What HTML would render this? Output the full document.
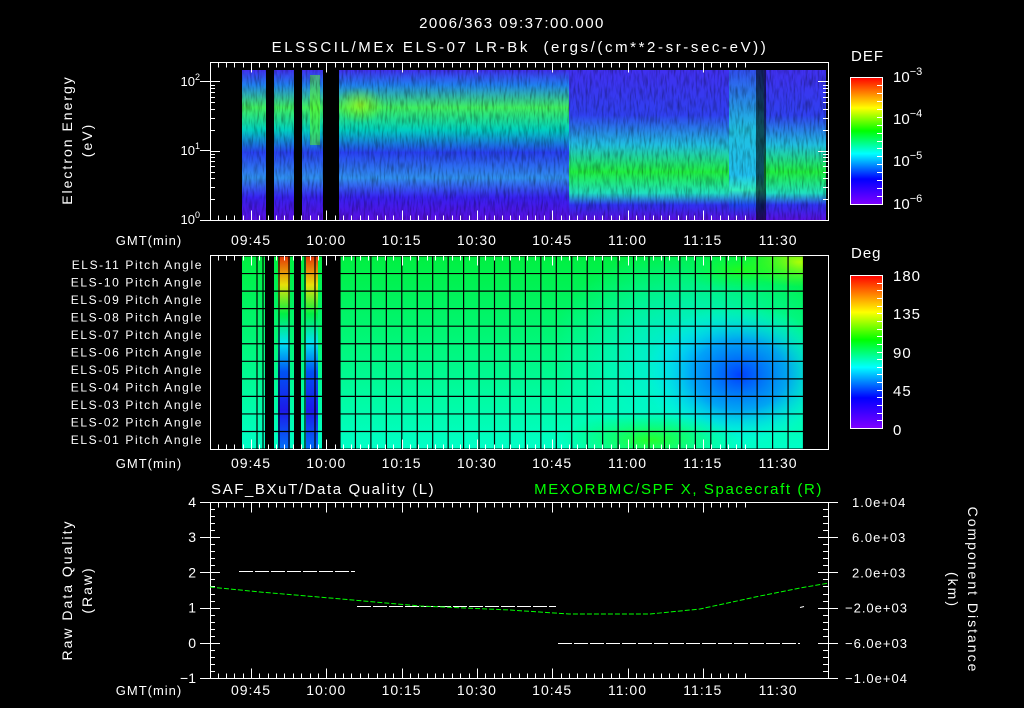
<!DOCTYPE html>
<html><head><meta charset="utf-8"><style>
html,body{margin:0;padding:0;background:#000;width:1024px;height:708px;overflow:hidden}
svg{display:block}
text{font-family:"Liberation Sans",sans-serif;fill:#fff}
</style></head><body>
<svg id="s" width="1024" height="708" xmlns="http://www.w3.org/2000/svg">
<defs>
<clipPath id="c1"><rect x="211" y="63" width="617" height="157"/></clipPath>
<clipPath id="c2"><rect x="340" y="256" width="464" height="193"/></clipPath>
<linearGradient id="cb" x1="0" y1="0" x2="0" y2="1">
<stop offset="0" stop-color="#ff0000"/><stop offset="0.12" stop-color="#ff8000"/><stop offset="0.24" stop-color="#ffff00"/><stop offset="0.42" stop-color="#00ff00"/><stop offset="0.6" stop-color="#00ffff"/><stop offset="0.8" stop-color="#0000ff"/><stop offset="1" stop-color="#8000ff"/>
</linearGradient>
<linearGradient id="sp" x1="0" y1="0" x2="0" y2="1">
<stop offset="0" stop-color="#4030f0"/><stop offset="0.1" stop-color="#2080f0"/><stop offset="0.25" stop-color="#40f060"/><stop offset="0.4" stop-color="#00d0c0"/><stop offset="0.55" stop-color="#2840f0"/><stop offset="0.72" stop-color="#3090f0"/><stop offset="0.85" stop-color="#3820f0"/><stop offset="1" stop-color="#5810e0"/>
</linearGradient>
<linearGradient id="sp2" x1="0" y1="0" x2="0" y2="1">
<stop offset="0" stop-color="#4030f0"/><stop offset="0.3" stop-color="#3040f0"/><stop offset="0.5" stop-color="#20c0e0"/><stop offset="0.68" stop-color="#20f040"/><stop offset="0.82" stop-color="#20e0c0"/><stop offset="0.9" stop-color="#3030f0"/><stop offset="1" stop-color="#5810e0"/>
</linearGradient>
<linearGradient id="sp3" x1="0" y1="0" x2="0" y2="1">
<stop offset="0" stop-color="#3050f0"/><stop offset="0.4" stop-color="#20c0e0"/><stop offset="0.7" stop-color="#20c0f0"/><stop offset="0.8" stop-color="#30f0c0"/><stop offset="0.9" stop-color="#2040f0"/><stop offset="1" stop-color="#5810e0"/>
</linearGradient>
<linearGradient id="pa" x1="0" y1="0" x2="0" y2="1">
<stop offset="0" stop-color="#00f040"/><stop offset="0.5" stop-color="#00f880"/><stop offset="1" stop-color="#00ffc8"/>
</linearGradient>
<linearGradient id="pc" x1="0" y1="0" x2="0" y2="1">
<stop offset="0" stop-color="#ff2000"/><stop offset="0.15" stop-color="#ffe000"/><stop offset="0.3" stop-color="#00f040"/><stop offset="0.45" stop-color="#00e0ff"/><stop offset="0.6" stop-color="#0040ff"/><stop offset="0.8" stop-color="#2000f0"/><stop offset="1" stop-color="#0060ff"/>
</linearGradient>
<radialGradient id="bl"><stop offset="0" stop-color="#0040ff"/><stop offset="0.5" stop-color="#0090ff" stop-opacity="0.8"/><stop offset="1" stop-color="#00ffff" stop-opacity="0"/></radialGradient>
<radialGradient id="cy"><stop offset="0" stop-color="#00e0ff"/><stop offset="1" stop-color="#00ffff" stop-opacity="0"/></radialGradient>
<radialGradient id="gr"><stop offset="0" stop-color="#30ff00"/><stop offset="1" stop-color="#00ff40" stop-opacity="0"/></radialGradient>
<radialGradient id="ye"><stop offset="0" stop-color="#c0ff00"/><stop offset="1" stop-color="#80ff00" stop-opacity="0"/></radialGradient>
<filter id="nz"><feTurbulence type="fractalNoise" baseFrequency="0.5 0.08" numOctaves="2" seed="3"/><feColorMatrix type="matrix" values="0 0 0 0 0  0 0 0 0 0  0 0 0 0 0  0 0 0 -2.2 1.25"/></filter>
</defs>

<text x="512" y="28" font-size="15" text-anchor="middle" letter-spacing="1.5">2006/363 09:37:00.000</text>
<text x="520" y="52" font-size="15" text-anchor="middle" letter-spacing="2.6" xml:space="preserve">ELSSCIL/MEx ELS-07 LR-Bk  (ergs/(cm**2-sr-sec-eV))</text>

<g clip-path="url(#c1)">
<rect x="242" y="70" width="24" height="150" fill="url(#sp)"/>
<rect x="274" y="70" width="20" height="150" fill="url(#sp)"/>
<rect x="302" y="70" width="21" height="150" fill="url(#sp)"/>
<rect x="310" y="75" width="10" height="70" fill="#60ff20" opacity="0.5"/>
<rect x="339" y="70" width="230" height="150" fill="url(#sp)"/>
<rect x="569" y="70" width="160" height="150" fill="url(#sp2)"/>
<rect x="729" y="70" width="35" height="150" fill="url(#sp3)"/>
<rect x="764" y="70" width="62" height="150" fill="url(#sp2)"/>
<ellipse cx="360" cy="105" rx="25" ry="18" fill="url(#ye)" opacity="0.6"/>
<rect x="756" y="70" width="10" height="150" fill="#000" opacity="0.6"/>
<rect x="210" y="70" width="618" height="150" filter="url(#nz)" opacity="0.35"/>
</g>
<rect x="210" y="62" width="32" height="158" fill="#000"/>
<rect x="266" y="62" width="8" height="158" fill="#000"/>
<rect x="294" y="62" width="8" height="158" fill="#000"/>
<rect x="323" y="62" width="16" height="158" fill="#000"/>

<rect x="242" y="256" width="23" height="193" fill="url(#pa)"/>
<rect x="274" y="256" width="20" height="193" fill="url(#pa)"/>
<rect x="301" y="256" width="21" height="193" fill="url(#pa)"/>
<rect x="278" y="256" width="12" height="193" fill="url(#pc)" opacity="0.9"/>
<rect x="306" y="256" width="12" height="193" fill="url(#pc)" opacity="0.9"/>
<g clip-path="url(#c2)">
<rect x="340" y="256" width="464" height="193" fill="url(#pa)"/>
<ellipse cx="690" cy="355" rx="140" ry="110" fill="url(#cy)" opacity="0.8"/>
<ellipse cx="740" cy="375" rx="95" ry="70" fill="url(#bl)"/>
<ellipse cx="650" cy="440" rx="90" ry="28" fill="url(#gr)" opacity="0.8"/>
<ellipse cx="800" cy="262" rx="60" ry="25" fill="url(#ye)" opacity="0.9"/>
<ellipse cx="740" cy="270" rx="60" ry="20" fill="url(#gr)" opacity="0.7"/>
</g>
<g id="grid"></g>

<rect x="210.5" y="62.5" width="618" height="158" fill="none" stroke="#fff"/>
<rect x="210.5" y="255.5" width="618" height="194" fill="none" stroke="#fff"/>
<rect x="210.5" y="502.5" width="618" height="176" fill="none" stroke="#fff"/>
<g id="ticks" stroke="#fff"></g>
<g id="lbl"></g>

<text x="200" y="86" font-size="13" text-anchor="end">10<tspan dy="-6" font-size="9">2</tspan></text>
<text x="200" y="155" font-size="13" text-anchor="end">10<tspan dy="-6" font-size="9">1</tspan></text>
<text x="200" y="224" font-size="13" text-anchor="end">10<tspan dy="-6" font-size="9">0</tspan></text>
<text transform="translate(72,140) rotate(-90)" font-size="14" text-anchor="middle" letter-spacing="2">Electron Energy</text>
<text transform="translate(92,140) rotate(-90)" font-size="14" text-anchor="middle" letter-spacing="2">(eV)</text>

<text x="211" y="494" font-size="15" letter-spacing="1.6">SAF_BXuT/Data Quality (L)</text>
<text x="823" y="494" font-size="15" text-anchor="end" letter-spacing="1.6" style="fill:#00ff00">MEXORBMC/SPF X, Spacecraft (R)</text>
<text transform="translate(72,590) rotate(-90)" font-size="14" text-anchor="middle" letter-spacing="2">Raw Data Quality</text>
<text transform="translate(92,590) rotate(-90)" font-size="14" text-anchor="middle" letter-spacing="2">(Raw)</text>
<text transform="translate(968,590) rotate(90)" font-size="14" text-anchor="middle" letter-spacing="2">Component Distance</text>
<text transform="translate(948,590) rotate(90)" font-size="14" text-anchor="middle" letter-spacing="2">(km)</text>
<g stroke="#fff" stroke-width="1" stroke-dasharray="14 2">
<line x1="239" y1="571.5" x2="355" y2="571.5"/>
<line x1="357" y1="606.5" x2="556" y2="606.5"/>
<line x1="558" y1="643.5" x2="800" y2="643.5"/>
</g>
<line x1="800" y1="607.5" x2="804" y2="606.5" stroke="#fff"/>
<polyline points="210,587 260,592 330,598 420,606 510,610 569,614 650,614 700,609 760,596 800,588 829,583" fill="none" stroke="#00ff00" stroke-dasharray="5 2"/>

<text x="851" y="61" font-size="15" letter-spacing="1">DEF</text>
<rect x="850.5" y="77.5" width="32" height="127" fill="url(#cb)" stroke="#fff"/>
<text x="893" y="82" font-size="15">10<tspan dy="-7" font-size="11">−3</tspan></text>
<text x="893" y="124" font-size="15">10<tspan dy="-7" font-size="11">−4</tspan></text>
<text x="893" y="166" font-size="15">10<tspan dy="-7" font-size="11">−5</tspan></text>
<text x="893" y="209" font-size="15">10<tspan dy="-7" font-size="11">−6</tspan></text>
<text x="851" y="258" font-size="15" letter-spacing="1">Deg</text>
<rect x="850.5" y="275.5" width="32" height="153" fill="url(#cb)" stroke="#fff"/>
<text x="893" y="281" font-size="15" letter-spacing="1">180</text>
<text x="893" y="319" font-size="15" letter-spacing="1">135</text>
<text x="893" y="358" font-size="15" letter-spacing="1">90</text>
<text x="893" y="396" font-size="15" letter-spacing="1">45</text>
<text x="893" y="435" font-size="15">0</text>
<g id="cbt" stroke="#fff"></g>
</svg>
<script>
var NS="http://www.w3.org/2000/svg";
function el(p,t,a,txt){var e=document.createElementNS(NS,t);for(var k in a)e.setAttribute(k,a[k]);if(txt!=null)e.textContent=txt;document.getElementById(p).appendChild(e);return e;}
function ln(p,x1,y1,x2,y2){el(p,"line",{x1:x1,y1:y1,x2:x2,y2:y2});}
for(var x=340;x<=804;x+=15.45){ln("grid",x,256,x,449);}
for(var i=0;i<=11;i++){var y=256+i*17.55;ln("grid",340,y,804,y);ln("grid",242,y,265,y);ln("grid",274,y,294,y);ln("grid",301,y,322,y);}
[257,263,279,289,305,315].forEach(function(x){ln("grid",x,256,x,449);});
document.getElementById("grid").setAttribute("stroke","#000");
document.getElementById("grid").setAttribute("stroke-width","1.2");
var sp=75.3;
var panels=[[62.5,220.5],[255.5,449.5],[502.5,678.5]];
panels.forEach(function(p){
 for(var k=-5;k<60;k++){var x=251+k*sp/9;if(x<211||x>828)continue;var L=(k%9==0)?10:5;x=Math.round(x)+0.5;ln("ticks",x,p[0],x,p[0]+L);ln("ticks",x,p[1],x,p[1]-L);}
});
var labs=["09:45","10:00","10:15","10:30","10:45","11:00","11:15","11:30"];
[240,463,690].forEach(function(y){
 el("lbl","text",{x:149,y:y+5,"font-size":13,"text-anchor":"middle","letter-spacing":"1"},"GMT(min)");
 labs.forEach(function(s,i){el("lbl","text",{x:251+i*sp,y:y+5,"font-size":14,"text-anchor":"middle","letter-spacing":"1"},s);});
});
for(var i=0;i<11;i++){el("lbl","text",{x:203,y:269+i*17.5,"font-size":12,"text-anchor":"end","letter-spacing":"1.6"},"ELS-"+(i<2?(11-i):"0"+(11-i))+" Pitch Angle");}
[0,1].forEach(function(d){for(var m=1;m<=10;m++){var y=220-(d+Math.log10(m))*69.3;if(y<62)continue;y=Math.round(y)+0.5;var L=(m==1||m==10)?10:5;ln("ticks",210,y,210+L,y);ln("ticks",828,y,828-L,y);}});
for(var i=0;i<=25;i++){var y=Math.round(502+i*176/25)+0.5;var L=(i%5==0)?10:5;ln("ticks",210,y,210+L,y);ln("ticks",828,y,828-L,y);if(i%5==0){ln("ticks",200,y,210,y);ln("ticks",828,y,838,y);}}
["4","3","2","1","0","−1"].forEach(function(s,i){el("lbl","text",{x:196,y:507+i*35.2,"font-size":14,"text-anchor":"end"},s);});
["1.0e+04","6.0e+03","2.0e+03","−2.0e+03","−6.0e+03","−1.0e+04"].forEach(function(s,i){el("lbl","text",{x:s[0]=="−"?845:852,y:507+i*35.2,"font-size":13,"letter-spacing":"1"},s);});
[81.5,150.5,220.5].forEach(function(y){ln("ticks",200,y,210,y);});
for(var i=1;i<16;i++){var y=Math.round(77+i*127/16)+0.5;ln("cbt",882,y,877,y);}
for(var i=1;i<20;i++){var y=Math.round(275+i*153/20)+0.5;ln("cbt",882,y,877,y);}
</script>
</body></html>
